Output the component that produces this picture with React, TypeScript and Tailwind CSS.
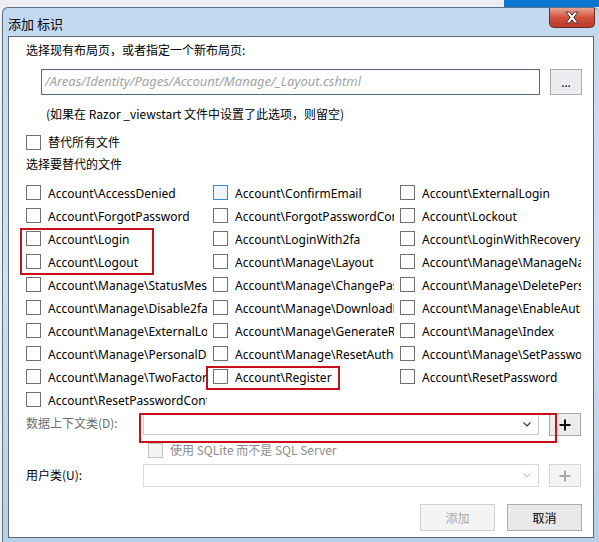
import React from "react";

const items = [
  "Account\\AccessDenied",
  "Account\\ConfirmEmail",
  "Account\\ExternalLogin",
  "Account\\ForgotPassword",
  "Account\\ForgotPasswordConfirmation",
  "Account\\Lockout",
  "Account\\Login",
  "Account\\LoginWith2fa",
  "Account\\LoginWithRecoveryCode",
  "Account\\Logout",
  "Account\\Manage\\Layout",
  "Account\\Manage\\ManageNav",
  "Account\\Manage\\StatusMessage",
  "Account\\Manage\\ChangePassword",
  "Account\\Manage\\DeletePersonalData",
  "Account\\Manage\\Disable2fa",
  "Account\\Manage\\DownloadPersonalData",
  "Account\\Manage\\EnableAuthenticator",
  "Account\\Manage\\ExternalLogins",
  "Account\\Manage\\GenerateRecoveryCodes",
  "Account\\Manage\\Index",
  "Account\\Manage\\PersonalData",
  "Account\\Manage\\ResetAuthenticator",
  "Account\\Manage\\SetPassword",
  "Account\\Manage\\TwoFactorAuthentication",
  "Account\\Register",
  "Account\\ResetPassword",
  "Account\\ResetPasswordConfirmation",
];

const font = { fontFamily: '"Segoe UI", "Noto Sans", "Noto Sans CJK SC", sans-serif' };

function Box({ hot, disabled }: { hot?: boolean; disabled?: boolean }) {
  const cls = hot
    ? "border-[#3c8ad6] bg-[#eef5fd]"
    : disabled
    ? "border-[#c4c4c4] bg-[#f3f3f3]"
    : "border-[#707070] bg-white";
  return <div className={`w-[15px] h-[15px] shrink-0 border ${cls}`} />;
}

function Chevron({ color }: { color: string }) {
  return (
    <svg width="8" height="5" viewBox="0 0 8 5">
      <path d="M0.5 0.5 L4 4 L7.5 0.5" fill="none" stroke={color} strokeWidth="1.2" />
    </svg>
  );
}

function Plus({ color }: { color: string }) {
  return (
    <svg width="12" height="12" viewBox="0 0 12 12">
      <path d="M6 0.5 V11.5 M0.5 6 H11.5" stroke={color} strokeWidth="2" />
    </svg>
  );
}

export default function App() {
  return (
    <div
      className="relative w-[599px] h-[542px] overflow-hidden bg-[#f0f0f0] text-[12px] text-black"
      style={font}
    >
      {/* top strip behind window */}
      <div className="flex h-[7px]">
        <div className="flex-1 bg-[#eeeef2]" />
        <div className="w-[95px] bg-[#0b77d0]" />
      </div>
      {/* window */}
      <div className="ml-[2px] h-[535px] rounded-t-[6px] border-l border-t border-[#5a6f86] bg-gradient-to-b from-[#c3d8ee] via-[#cfe0f2] to-[#b8cfe8] flex flex-col">
        {/* title bar */}
        <div className="h-[28px] flex items-start shrink-0">
          <div className="pl-[5px] pt-[8px] text-[13px] leading-[16px] text-black flex-1" style={{ fontFamily: '"Noto Sans CJK SC", sans-serif' }}>
            添加 标识
          </div>
          <div className="mr-[4px] w-[46px] h-[20px] rounded-b-[5px] border border-t-0 border-[#6e2b23] bg-gradient-to-b from-[#e8a497] via-[#d2503e] to-[#b83a2a] flex items-center justify-center">
            <svg width="16" height="13" viewBox="0 0 16 13">
              <path
                d="M2 1 H5.5 L8 4.2 L10.5 1 H14 L9.8 6.5 L14 12 H10.5 L8 8.8 L5.5 12 H2 L6.2 6.5 Z"
                fill="#ffffff"
                stroke="#4a2a28"
                strokeWidth="1"
                strokeLinejoin="round"
              />
            </svg>
          </div>
        </div>
        {/* client area */}
        <div className="ml-[5px] mr-[5px] h-[502px] border border-[#5b6878] bg-white flex flex-col" style={{ fontFamily: '"Noto Sans CJK SC", "Segoe UI", sans-serif' }}>
          <div className="h-[26px] pl-[17px] flex items-center leading-none">选择现有布局页，或者指定一个新布局页:</div>
          <div className="mt-[6px] h-[26px] flex pl-[32px]">
            <div className="w-[499px] h-[26px] border border-[#56687a] flex items-center pl-[3px] overflow-hidden">
              <span className="italic text-[13px] text-[#a3a3a3] whitespace-nowrap" style={font}>
                /Areas/Identity/Pages/Account/Manage/_Layout.cshtml
              </span>
            </div>
            <div className="ml-[10px] w-[32px] h-[26px] border border-[#acacac] bg-[#ececf0] flex items-center justify-center text-[12px] leading-none pt-[2px]" style={font}>
              ...
            </div>
          </div>
          <div className="mt-[9px] h-[20px] pl-[37px] flex items-center leading-none">
            (如果在 Razor _viewstart 文件中设置了此选项，则留空)
          </div>
          <div className="mt-[8px] h-[20px] pl-[17px] flex items-center gap-[7px] leading-none">
            <Box />
            <span>替代所有文件</span>
          </div>
          <div className="mt-[2px] h-[20px] pl-[17px] flex items-center leading-none">选择要替代的文件</div>
          <div className="mt-[7px] pl-[17px] grid grid-cols-[181px_181px_181px] gap-x-[6px]" style={font}>
            {items.map((t, i) => (
              <div key={t} className="h-[23px] flex items-center gap-[7px] whitespace-nowrap">
                <Box hot={i === 1} />
                <span className="leading-[17px] pt-[1px] overflow-hidden flex-1 min-w-0">{t}</span>
              </div>
            ))}
          </div>
          <div className="mt-[2px] h-[23px] flex items-center">
            <div className="w-[134px] pl-[17px] text-[#6d6d6d] leading-none pb-[3px]">数据上下文类(D):</div>
            <div className="w-[396px] h-[21px] border border-[#cacad3] bg-white flex items-center justify-end pr-[7px]">
              <Chevron color="#3a3a3a" />
            </div>
            <div className="ml-[10px] w-[32px] h-[23px] border border-[#a8a8a8] bg-[#ececef] flex items-center justify-center">
              <Plus color="#111111" />
            </div>
          </div>
          <div className="mt-[5px] h-[18px] pl-[139px] flex items-center gap-[7px] text-[#8c8c8c] leading-none">
            <Box disabled />
            <span className="pb-[1px]">使用 SQLite 而不是 SQL Server</span>
          </div>
          <div className="mt-[5px] h-[23px] flex items-center">
            <div className="w-[134px] pl-[17px] leading-none pb-[1px]">用户类(U):</div>
            <div className="w-[396px] h-[23px] border border-[#dadae0] bg-white flex items-center justify-end pr-[7px]">
              <Chevron color="#c8c8c8" />
            </div>
            <div className="ml-[10px] w-[32px] h-[23px] border border-[#d4d4d4] bg-[#f4f4f4] flex items-center justify-center">
              <Plus color="#a9a9a9" />
            </div>
          </div>
          <div className="mt-[17px] h-[27px] flex justify-end pr-[11px] gap-[12px]">
            <div className="w-[75px] h-[27px] border border-[#d0d0d0] bg-[#f4f4f4] text-[#a8a8a8] flex items-center justify-center leading-none">添加</div>
            <div className="w-[75px] h-[27px] border border-[#acacac] bg-[#e9e9ec] flex items-center justify-center leading-none">取消</div>
          </div>
        </div>
      </div>

      {/* red annotation boxes */}
      <div className="absolute left-[20px] top-[228px] w-[134px] h-[47px] border-2 border-[#c8101a]" />
      <div className="absolute left-[206px] top-[366px] w-[134px] h-[24px] border-2 border-[#c8101a]" />
      <div className="absolute left-[139px] top-[413px] w-[418px] h-[30px] border-2 border-[#c8101a]" />
    </div>
  );
}
